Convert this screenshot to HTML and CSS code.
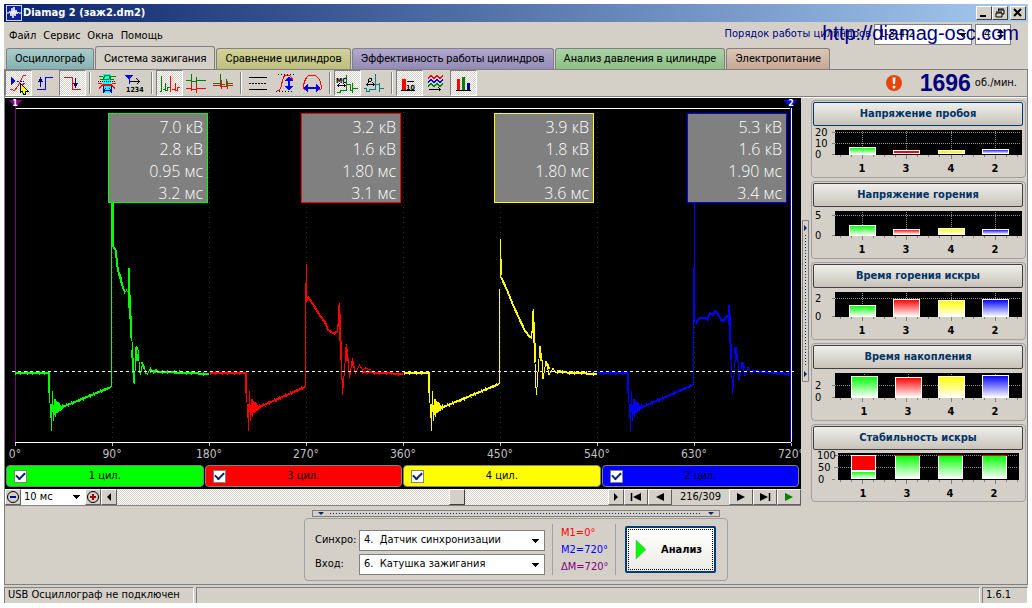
FILE: index.html
```html
<!DOCTYPE html>
<html lang="ru">
<head>
<meta charset="utf-8">
<title>Diamag 2 (заж2.dm2)</title>
<link rel="stylesheet" href="styles.css">
</head>
<body>
<div class="window">
  <header class="titlebar">
    <svg class="app-icon" viewBox="0 0 16 16"><rect width="16" height="16" fill="#d0d8f0"/><rect x="1" y="1" width="14" height="14" fill="#1020a0"/><path d="M1 8h2l1-2 1 5 1-8 1 10 1-11 1 9 1-6 1 4 1-2 1 1h2" fill="none" stroke="#fff"/></svg>
    <h1 class="title">Diamag 2 (заж2.dm2)</h1>
    <div class="winbuttons">
      <button class="winbtn" aria-label="Свернуть"><svg viewBox="0 0 12 10"><path d="M2 8h6" stroke="#000" stroke-width="2"/></svg></button>
      <button class="winbtn" aria-label="Восстановить"><svg viewBox="0 0 12 10"><path d="M4 1h6M4 2h6v4h-2M4.500 1v2M2 4h6M2 5h6v4H2z" fill="none" stroke="#000"/></svg></button>
      <button class="winbtn close" aria-label="Закрыть"><svg viewBox="0 0 12 10"><path d="M2 1l7 7M9 1L2 8" stroke="#000" stroke-width="2"/></svg></button>
    </div>
  </header>

  <div class="menubar">
    <nav class="menu">
      <a href="#file">Файл</a><a href="#service">Сервис</a><a href="#windows">Окна</a><a href="#help">Помощь</a>
    </nav>
    <div class="order">
      <label for="order">Порядок работы цилиндров</label>
      <select id="order" class="box order-select"><option>1-3-4-2</option></select>
      <div class="box spin"><input type="text" value="4" aria-label="Число цилиндров"><svg viewBox="0 0 7 12"><path d="M0 5l3.500-4L7 5zM0 7l3.500 4L7 7z"/></svg></div>
      <a class="site" href="#site">http://diamag-osc.com</a>
    </div>
  </div>

  <nav class="tabs">
    <button class="tab teal">Осциллограф</button>
    <button class="tab active">Система зажигания</button>
    <button class="tab olive">Сравнение цилиндров</button>
    <button class="tab violet">Эффективность работы цилиндров</button>
    <button class="tab green">Анализ давления в цилиндре</button>
    <button class="tab brown">Электропитание</button>
  </nav>

  <main class="page">
    <div class="toolbar">
      <div class="toolgroup">
        <button class="tool on" aria-label="Курсор"><svg viewBox="0 0 27 24"><path d="M5 18l3 1h2l3-4 3-6 2-4 3-1M17 14l3-2" fill="none" stroke="red"/><path d="M12 10h7" stroke="#00f" stroke-dasharray="2 1"/><path d="M6 6v8l5-4z" fill="#00f"/><path d="M15 12v10l2-2 2 4 2-1-1-3h3z" fill="#ff0" stroke="#000"/></svg></button>
        <button class="tool" aria-label="Фронт"><svg viewBox="0 0 27 24"><path d="M5 18.500h8v-12h8" fill="none" stroke="#00f"/><path d="M8.500 16V9" stroke="#000080"/><path d="M6 11l2.500-5L11 11z" fill="#000080"/></svg></button>
        <button class="tool on" aria-label="Спад"><svg viewBox="0 0 27 24"><path d="M5 6.500h8v12h9" fill="none" stroke="red"/><path d="M16.500 7v8" stroke="#000080"/><path d="M14 12l2.500 5L19 12z" fill="#000080"/></svg></button>
      </div>
      <div class="toolgroup">
        <button class="tool" aria-label="Наложение"><svg viewBox="0 0 27 24"><path d="M9 3h8v19H9z" fill="#0ff"/><path d="M4.500 5.500h4l2 3h4l2-3h5M6 8.500h3l2-4h4l2 4h3" fill="none" stroke="green"/><path d="M4 10.500h18" stroke="#000" stroke-dasharray="1 1"/><path d="M4 12.500h3l3 2h6l3-2h3M5 17.500l4-4h8l4 4" fill="none" stroke="red"/><path d="M9.500 15v7M17.500 15v7M9 19.500h8M11.500 17.500l-2 2 2 2M15.500 17.500l2 2-2 2" fill="none" stroke="#0000a0"/></svg></button>
        <button class="tool" aria-label="Нумерация"><svg viewBox="0 0 27 24"><path d="M4 4h8l-4 5z" fill="#00f"/><path d="M8 8v5" stroke="#00f"/><path d="M9 10.500h9M15.500 7.500l3 3-3 3" fill="none" stroke="#000"/><text x="5" y="21" class="tiny">1234</text></svg></button>
      </div>
      <div class="toolgroup">
        <button class="tool on" aria-label="Парад"><svg viewBox="0 0 27 24"><path d="M3.500 20.500h2V4.500v15M6.500 18.500h3v-7v8h2v-3h2" fill="none" stroke="green"/><path d="M13.500 20.500h1V4.500v15M15.500 18.500h4v-7v8h2v-3h2" fill="none" stroke="red"/></svg></button>
        <button class="tool" aria-label="Растр"><svg viewBox="0 0 27 24"><path d="M3 9.500h5M8.500 3v13M9 10.500h4M13.500 6v8M14 9.500h9" fill="none" stroke="green"/><path d="M3 17.500h5M8.500 12v8M9 18.500h4M13.500 14v8M14 17.500h9" fill="none" stroke="red"/></svg></button>
        <button class="tool" aria-label="Совмещение"><svg viewBox="0 0 27 24"><path d="M3 12.500h7M10.500 3v13M11 13.500h4M16.500 8v8M17 12.500h6" fill="none" stroke="green"/><path d="M3 14.500h8M11.500 9v9M12 15.500h4M17.500 10v8M18 14.500h5" fill="none" stroke="red"/></svg></button>
      </div>
      <div class="toolgroup">
        <button class="tool" aria-label="Уровень"><svg viewBox="0 0 27 24"><path d="M4 6.500h18M4 18.500h18" stroke="#000"/><path d="M4 12.500h18" stroke="#000" stroke-dasharray="2 1"/></svg></button>
        <button class="tool" aria-label="Масштаб по вертикали"><svg viewBox="0 0 27 24"><path d="M6 3.500h16M4 20.500h18" stroke="#000" stroke-dasharray="1 2"/><path d="M5 20c7 0 3-15 9-16 5 0 6 3 7 6" fill="none" stroke="red"/><path d="M17 7v10" stroke="#00f" stroke-width="2"/><path d="M13 10l4-5 4 5zM13 15l4 5 4-5z" fill="#00f"/></svg></button>
        <button class="tool" aria-label="Масштаб по горизонтали"><svg viewBox="0 0 27 24"><path d="M7 18H5c-1-7 2-14 8-14s10 7 9 14h-2" fill="none" stroke="red"/><path d="M8 17h10" stroke="#00f" stroke-width="2"/><path d="M9 13l-5 4 5 4zM17 13l5 4-5 4z" fill="#00f"/></svg></button>
      </div>
      <div class="toolgroup">
        <button class="tool on" aria-label="Время в мс"><svg viewBox="0 0 27 24"><path d="M3 21.500h3v-2h6M12.500 4v16M13 13.500h3v6h2M18.500 12v10M19 17.500h5" fill="none" stroke="green"/><text x="2" y="12" class="tiny">МС</text><path d="M3 14.500h8M5.500 12.500l-2 2 2 2M9.500 12.500l2 2-2 2" fill="none" stroke="#000"/></svg></button>
        <button class="tool" aria-label="Угол"><svg viewBox="0 0 27 24"><path d="M3 17.500h2v3h3v-2h6M14.500 3v16M15 13.500h3M18.500 12v9M19 17.500h4" fill="none" stroke="teal"/><circle cx="9" cy="9" r="1.500" fill="none" stroke="#000"/><path d="M5 13.500h9M7.500 11.500l-2 2 2 2M11.500 11.500l2 2-2 2" fill="none" stroke="#000"/></svg></button>
      </div>
      <div class="toolgroup">
        <button class="tool on" aria-label="Среднее"><svg viewBox="0 0 27 24"><path d="M6 8h4v11H6z" fill="red"/><path d="M5 19.500h14M11 10.500h7" stroke="#000"/><text x="10" y="19" class="tiny">10</text></svg></button>
        <button class="tool" aria-label="Тренд"><svg viewBox="0 0 27 24"><path d="M5 7.500l3-3 3 3 3-3 3 3 3-3" fill="none" stroke="red"/><path d="M5 11.500l3-3 3 3 3-3 3 3 3-3" fill="none" stroke="#00f"/><path d="M5 15.500l3-3 3 3 3-3 3 3 3-3" fill="none" stroke="green"/><path d="M6 18.500h12M15.500 16.500l2 2-2 2" fill="none" stroke="#000"/></svg></button>
        <button class="tool on" aria-label="Диаграмма"><svg viewBox="0 0 27 24"><path d="M7 8h3v11H7z" fill="red"/><path d="M12 6h3v13h-3z" fill="green"/><path d="M17 12h3v7h-3z" fill="#000080"/><path d="M6 19.500h15" stroke="#000"/></svg></button>
      </div>
      <div class="rpm">
        <svg class="alert" viewBox="0 0 18 18"><circle cx="9" cy="9" r="8" fill="#e8450c"/><path d="M7.500 3.500h3l-.5 6.500H8z" fill="#fff"/><circle cx="9" cy="13" r="1.500" fill="#fff"/></svg>
        <strong class="rpm-value">1696</strong><span>об./мин.</span>
      </div>
    </div>

    <div class="work">
      <section class="scope">
        <svg class="wave" viewBox="5 98 796 366">
          <defs><path id="ring" d="M48.500 373v20M51.500 404v12M54.500 400v15M55.500 405v12M56.500 402v11M57.500 404v9M58.500 403v9M59.500 405v6M60.500 405v6M62.500 404v5"/></defs>
          <rect x="5" y="98" width="796" height="366" fill="#000"/>
          <path class="vgrid" d="M112.500 112V442M209.500 112V442M306.500 112V442M403.500 112V442M500.500 112V442M597.500 112V442M694.500 112V442"/>
          <path d="M15 108.500h776M15 442.500h776M791.500 108v334" stroke="#fff" fill="none"/>
          <path d="M15.500 443v3M112.500 443v3M209.500 443v3M306.500 443v3M403.500 443v3M500.500 443v3M597.500 443v3M694.500 443v3M791.500 443v3" stroke="#c0c0c0"/>
          <path d="M15.500 106v336" stroke="#800080"/>
          <g stroke="#0f0" fill="none">
            <path class="thick" d="M15 373h34M60 408L111 387M150 371L163 372L209 374"/>
            <path class="rough" d="M15 373h34M56 410L111 387M150 371L209 374"/>
            <use href="#ring"/>
            <path d="M49.500 372v22l1 18v-8l1 27v-13l1-27v12l1 18v-10l1-12 1 12v-12l1 12v-10l1 9v-8l1 6v-6l2 4M111.500 387V203M112.500 203v43l2 3 2 2 1 14 2 9 1 1 2 9 2 9 2-3 2 3 1-25v22l1 9 1 33 1 18 1 32 1 1 1-23 1-14 2 5 1 20 1 4 2-12 2 4 1 6 2 1 3-6 3 5 3-3 3 2 6-1"/>
            <path d="M112.500 203v43" stroke-width="3"/>
            <path class="stair" d="M113 246l3 5 1 14 2 9 3 10 2 7M129 268v40M130 298l1 40M132 350l2 30M136 347l1 14M142 362l2 7"/>
          </g>
          <g stroke="red" fill="none">
            <path class="thick" d="M210 373h36M257 408L305 387M362 372L403 374"/>
            <path class="rough" d="M210 373h36M253 410L305 387M362 372L403 374"/>
            <use href="#ring" x="197"/>
            <path d="M246.500 372v22l1 18v-8l1 27v-13l1-27v12l1 18v-10l1-12 1 12v-12l1 12v-10l1 9v-8l1 6v-6l2 4M305.500 387V283M306.500 264v38l2-5 5 7 7 12 5 6 3 8 6 4 3-3 2-28 1 20 1 40 1 32 2-25 2-26 2 19 1 15 3-20 3 15 4-8 3 5 3-2 5 2"/>
            <path d="M306 283v19" stroke-width="2"/>
            <path class="stair" d="M308 297l5 7 7 12 5 6 3 8 5 3 4-1M339 305v22M340 320l1 40M346 347l1 14M352 361l2 7"/>
          </g>
          <g stroke="#ff0" fill="none">
            <path class="thick" d="M404 373h25M441 408L499 384M557 372L597 374"/>
            <path class="rough" d="M404 373h25M437 410L499 384M557 372L597 374"/>
            <use href="#ring" x="380"/>
            <path d="M429.500 372v22l1 18v-8l1 27v-13l1-27v12l1 18v-10l1-12 1 12v-12l1 12v-10l1 9v-8l1 6v-6l2 4M499.500 384V289M500.500 239v38l2 2 5 11 6 15 6 13 6 13 6 7 2-29 1 36 1 35 1 15 2-30 1.500-19 2 14 1 19 3-18 3 14 4-7 3 5 3-3 4 2"/>
            <path d="M501 259v16" stroke-width="2"/>
            <path class="stair" d="M502 279l5 11 6 15 6 13 6 13 5 6 2-1M533 311v22M534 322l1 40M540 348l1 13M547 363l2 6"/>
          </g>
          <g stroke="#00f" fill="none">
            <path class="thick" d="M598 373h30M640 408L693 385M752 371L790 374"/>
            <path class="rough" d="M598 373h30M636 410L693 385M752 371L790 374"/>
            <use href="#ring" x="579"/>
            <path d="M628.500 372v22l1 18v-8l1 27v-13l1-27v12l1 18v-10l1-12 1 12v-12l1 12v-10l1 9v-8l1 6v-6l2 4M693.500 385V270M694.500 203v119l2 1 4-5h4l3 2 3-7 3 2 2-4 3 3 3 7h3l2-5 2 1 1-12 1 19 1 37 1 33 2-24 1.500-23 2 14 1 19 3-17 3 13 3-9 3 6 4-3 5 2"/>
            <path d="M694 268v52" stroke-width="2"/>
            <path class="stair" d="M696 322l4-4h4l3 1 3-6 3 2 2-4 3 3 3 6h3l3-5M729 305v20M730 325l1 35M735 347l1 13M742 362l2 6"/>
            <path d="M790.500 106v336"/>
          </g>
          <path d="M12 371.500h782" stroke="#fff" stroke-dasharray="3 3"/>
          <path d="M8 100h15l-7.500 7z" fill="#800080"/><path d="M783 100h15l-7.500 7z" fill="#00f"/>
          <g class="marker"><text x="15" y="106">1</text><text x="791" y="106">2</text></g>
          <g fill="#808080">
            <rect x="108.500" y="113.500" width="99" height="89" stroke="#0f0"/>
            <rect x="301.500" y="113.500" width="99" height="89" stroke="red"/>
            <rect x="494.500" y="113.500" width="99" height="89" stroke="#ff0"/>
            <rect x="687.500" y="113.500" width="99" height="89" stroke="#00f"/>
          </g>
          <g class="readout">
            <text x="203" y="133">7.0 кВ</text><text x="203" y="155">2.8 кВ</text><text x="203" y="177">0.95 мс</text><text x="203" y="199">3.2 мс</text>
            <text x="396" y="133">3.2 кВ</text><text x="396" y="155">1.6 кВ</text><text x="396" y="177">1.80 мс</text><text x="396" y="199">3.1 мс</text>
            <text x="589" y="133">3.9 кВ</text><text x="589" y="155">1.8 кВ</text><text x="589" y="177">1.80 мс</text><text x="589" y="199">3.6 мс</text>
            <text x="782" y="133">5.3 кВ</text><text x="782" y="155">1.6 кВ</text><text x="782" y="177">1.90 мс</text><text x="782" y="199">3.4 мс</text>
          </g>
          <g class="axis">
            <text x="15" y="458">0°</text><text x="112" y="458">90°</text><text x="209" y="458">180°</text><text x="306" y="458">270°</text><text x="403" y="458">360°</text><text x="500" y="458">450°</text><text x="597" y="458">540°</text><text x="694" y="458">630°</text><text x="791" y="458">720°</text>
          </g>
        </svg>
        <div class="legend">
          <label class="cyl c1"><input type="checkbox" checked><span>1 цил.</span></label>
          <label class="cyl c3"><input type="checkbox" checked><span>3 цил.</span></label>
          <label class="cyl c4"><input type="checkbox" checked><span>4 цил.</span></label>
          <label class="cyl c2"><input type="checkbox" checked><span>2 цил.</span></label>
        </div>
        <div class="scroller">
          <button class="sbtn" aria-label="Уменьшить"><svg viewBox="0 0 14 14"><circle cx="7" cy="7" r="5.500" fill="none" stroke="#000"/><path d="M4 7h6" stroke="#0000a0" stroke-width="2"/></svg></button>
          <select class="scale" aria-label="Развёртка"><option>10 мс</option></select>
          <button class="sbtn" aria-label="Увеличить"><svg viewBox="0 0 14 14"><circle cx="7" cy="7" r="5.500" fill="none" stroke="#000"/><path d="M4 7h6M7 4v6" stroke="#a00000" stroke-width="2"/></svg></button>
          <button class="sbtn" aria-label="Влево"><svg viewBox="0 0 14 14"><path d="M9 3v8L5 7z"/></svg></button>
          <input class="track" type="range" min="0" max="309" value="216" aria-label="Позиция">
          <button class="sbtn" aria-label="Вправо"><svg viewBox="0 0 14 14"><path d="M5 3v8l4-4z"/></svg></button>
          <button class="sbtn wide" aria-label="В начало"><svg viewBox="0 0 14 14"><path d="M2.500 3v8" stroke="#000" stroke-width="1.500"/><path d="M12 3v8L4 7z"/></svg></button>
          <button class="sbtn wide" aria-label="Назад"><svg viewBox="0 0 14 14"><path d="M11 3v8L3 7z"/></svg></button>
          <output class="frame">216/309</output>
          <button class="sbtn wide" aria-label="Вперёд"><svg viewBox="0 0 14 14"><path d="M3 3v8l8-4z"/></svg></button>
          <button class="sbtn wide" aria-label="В конец"><svg viewBox="0 0 14 14"><path d="M11.500 3v8" stroke="#000" stroke-width="1.500"/><path d="M2 3v8l8-4z"/></svg></button>
          <button class="sbtn wide" aria-label="Пуск"><svg viewBox="0 0 14 14"><path d="M3 3v8l8-4z" fill="green"/></svg></button>
        </div>
      </section>

      <div class="vsplit"><svg viewBox="0 0 7 162"><path d="M.5.500h6v161h-6z" fill="none" stroke="#808080"/><path d="M2 5v6l3-3zM2 151v6l3-3z" fill="#0a246a"/><path d="M3.500 15v131" stroke="#0a246a" stroke-dasharray="1 2"/></svg></div>

      <aside class="side">
        <svg class="defs" aria-hidden="true"><defs>
          <linearGradient id="g1" x2="0" y2="1"><stop stop-color="#0f0"/><stop offset="1" stop-color="#fff"/></linearGradient>
          <linearGradient id="g3" x2="0" y2="1"><stop stop-color="red"/><stop offset="1" stop-color="#fff"/></linearGradient>
          <linearGradient id="g4" x2="0" y2="1"><stop stop-color="#ff0"/><stop offset="1" stop-color="#fff"/></linearGradient>
          <linearGradient id="g2" x2="0" y2="1"><stop stop-color="#00f"/><stop offset="1" stop-color="#fff"/></linearGradient>
          <g id="ticks"><path d="M27.500 29v2M38.500 29v2M60.500 29v2M71.500 29v2M82.500 29v2M104.500 29v2M115.500 29v2M126.500 29v2M149.500 29v2M160.500 29v2M171.500 29v2M193.500 29v2M204.500 29v2M49.500 29v4M93.500 29v4M138.500 29v4M182.500 29v4M19 28.500h3"/></g>
        </defs></svg>
        <section class="card">
          <button class="cardbtn focus">Напряжение пробоя</button>
          <svg class="bars" viewBox="0 0 210 50"><path d="M22 4h187v25H22z"/><path class="grid" d="M22 6.500h185M22 17.500h185M49.500 5v23M93.500 5v23M138.500 5v23M182.500 5v23"/><use href="#ticks" class="ticks"/><path class="ticks" d="M19 6.500h3M19 17.500h3"/>
            <g class="bar"><path fill="url(#g1)" d="M36.500 21.500h26v7h-26z"/><path fill="red" d="M80.500 24.500h26v3h-26z"/><path fill="#ff0" d="M125.500 24.500h26v3h-26z"/><path fill="url(#g2)" d="M169.500 23.500h26v4h-26z"/></g>
            <text x="2" y="10">20</text><text x="2" y="21">10</text><text x="2" y="32">0</text>
            <g class="cat"><text x="49" y="46">1</text><text x="93" y="46">3</text><text x="138" y="46">4</text><text x="182" y="46">2</text></g></svg>
        </section>
        <section class="card">
          <button class="cardbtn">Напряжение горения</button>
          <svg class="bars" viewBox="0 0 210 50"><path d="M22 4h187v25H22z"/><path class="grid" d="M22 8.500h185M49.500 5v23M93.500 5v23M138.500 5v23M182.500 5v23"/><use href="#ticks" class="ticks"/><path class="ticks" d="M19 8.500h3"/>
            <g class="bar"><path fill="url(#g1)" d="M36.500 18.500h26v10h-26z"/><path fill="url(#g3)" d="M80.500 22.500h26v5h-26z"/><path fill="url(#g4)" d="M125.500 21.500h26v6h-26z"/><path fill="url(#g2)" d="M169.500 22.500h26v5h-26z"/></g>
            <text x="2" y="12">5</text><text x="2" y="32">0</text>
            <g class="cat"><text x="49" y="46">1</text><text x="93" y="46">3</text><text x="138" y="46">4</text><text x="182" y="46">2</text></g></svg>
        </section>
        <section class="card">
          <button class="cardbtn">Время горения искры</button>
          <svg class="bars" viewBox="0 0 210 50"><path d="M22 4h187v25H22z"/><path class="grid" d="M22 10.500h185M49.500 5v23M93.500 5v23M138.500 5v23M182.500 5v23"/><use href="#ticks" class="ticks"/><path class="ticks" d="M19 10.500h3"/>
            <g class="bar"><path fill="url(#g1)" d="M36.500 17.500h26v11h-26z"/><path fill="url(#g3)" d="M80.500 11.500h26v17h-26z"/><path fill="url(#g4)" d="M125.500 12.500h26v16h-26z"/><path fill="url(#g2)" d="M169.500 11.500h26v17h-26z"/></g>
            <text x="2" y="14">2</text><text x="2" y="32">0</text>
            <g class="cat"><text x="49" y="46">1</text><text x="93" y="46">3</text><text x="138" y="46">4</text><text x="182" y="46">2</text></g></svg>
        </section>
        <section class="card">
          <button class="cardbtn">Время накопления</button>
          <svg class="bars" viewBox="0 0 210 50"><path d="M22 4h187v25H22z"/><path class="grid" d="M22 16.500h185M51.500 5v23M95.500 5v23M138.500 5v23M182.500 5v23"/><use href="#ticks" class="ticks"/><path class="ticks" d="M19 16.500h3"/>
            <g class="bar"><path fill="url(#g1)" d="M38.500 7.500h26v21h-26z"/><path fill="url(#g3)" d="M82.500 8.500h26v20h-26z"/><path fill="url(#g4)" d="M125.500 7.500h26v21h-26z"/><path fill="url(#g2)" d="M169.500 6.500h26v22h-26z"/></g>
            <text x="2" y="20">2</text><text x="2" y="32">0</text>
            <g class="cat"><text x="51" y="46">1</text><text x="95" y="46">3</text><text x="138" y="46">4</text><text x="182" y="46">2</text></g></svg>
        </section>
        <section class="card">
          <button class="cardbtn">Стабильность искры</button>
          <svg class="bars" viewBox="0 0 210 50"><path d="M25 3h181v27H25z"/><path class="grid" d="M25 5.500h179M25 17.500h179"/><use href="#ticks" class="ticks" y="1"/><path class="ticks" d="M21 5.500h4M21 17.500h4"/>
            <g class="bar"><path fill="red" d="M38.500 5.500h24v15h-24z"/><path fill="url(#g1)" d="M38.500 21.500h24v7h-24z"/><path fill="url(#g1)" d="M82.500 5.500h24v23h-24z"/><path fill="url(#g1)" d="M125.500 5.500h24v23h-24z"/><path fill="url(#g1)" d="M169.500 5.500h24v23h-24z"/></g>
            <path d="M82 5.500h25M125 5.500h25M169 5.500h25" stroke="red"/>
            <text x="4" y="9">100</text><text x="5" y="21">50</text><text x="5" y="33">0</text>
            <g class="cat"><text x="50" y="47">1</text><text x="94" y="47">3</text><text x="137" y="47">4</text><text x="181" y="47">2</text></g></svg>
        </section>
      </aside>
    </div>

    <div class="bottom">
      <div class="hsplit"><i class="down"></i><i class="dots"></i><i class="down"></i></div>
      <section class="controls">
        <div class="form">
          <label for="sync">Синхро:</label><select id="sync" class="box"><option>4.&nbsp; Датчик синхронизации</option></select>
          <label for="input">Вход:</label><select id="input" class="box"><option>6.&nbsp; Катушка зажигания</option></select>
        </div>
        <div class="marks"><span class="m1">М1=0°</span><span class="m2">М2=720°</span><span class="dm">ΔМ=720°</span></div>
        <button class="analyze"><svg viewBox="0 0 12 20"><path d="M1 0v19l10-9.500z" fill="#0f0" stroke="#808080" stroke-width=".5"/></svg><span>Анализ</span></button>
      </section>
    </div>
  </main>

  <footer class="status"><span>USB Осциллограф не подключен</span><span></span><span>1.6.1</span></footer>
</div>
</body>
</html>
```
FILE: styles.css
```css
* { box-sizing: border-box; }
body { margin: 0; padding: 4px; background: #fff; color: #000; font: 11px/14px "DejaVu Sans Condensed", "DejaVu Sans", sans-serif; }
button, select, input { font: inherit; color: inherit; margin: 0; padding: 0; border: 0; border-radius: 0; background: none; }
a { color: inherit; text-decoration: none; }
svg { display: block; }
.window { background: #d4d0c8; display: flex; flex-direction: column; }

.titlebar { height: 18px; display: flex; align-items: center; gap: 1px; padding: 0 2px; background: linear-gradient(90deg, #0a246a, #a6caf0); }
.app-icon { width: 16px; height: 16px; }
.title { margin: 0; flex: 1; color: #fff; font: bold 11px/16px "DejaVu Sans Condensed", sans-serif; }
.winbuttons { display: flex; }
.winbtn { width: 16px; height: 14px; padding: 1px; background: #d4d0c8; border: 1px solid; border-color: #fff #404040 #404040 #fff; }
.winbtn svg { width: 12px; height: 10px; }
.close { margin-left: 2px; }

.menubar { height: 24px; display: flex; justify-content: space-between; align-items: center; padding: 0 17px 0 5px; }
.menu { display: flex; gap: 7px; padding-top: 3px; }
.order { position: relative; display: flex; align-items: center; gap: 3px; color: #000080; }
.box { background: #fff; border: 1px solid #808080; color: #000; }
.box, .scale { appearance: none; background-image: linear-gradient(#000, #000), linear-gradient(#000, #000), linear-gradient(#000, #000), linear-gradient(#000, #000); background-repeat: no-repeat; background-size: 7px 1px, 5px 1px, 3px 1px, 1px 1px; background-position: right 5px top 8px, right 6px top 9px, right 7px top 10px, right 8px top 11px; }
.order-select { width: 98px; height: 21px; padding-left: 4px; }
.spin { width: 36px; height: 21px; display: flex; align-items: center; justify-content: space-between; padding: 0 6px 0 8px; background-image: none; }
.spin input { width: 10px; }
.spin svg { width: 7px; height: 12px; }
.site { position: absolute; right: -8px; top: -1px; font: 20px/20px "Liberation Sans", Arial, sans-serif; color: #000080; }

.tabs { display: flex; gap: 1px; align-items: flex-end; padding-left: 2px; height: 23px; }
.tab { height: 21px; padding: 0 8px; border: 1px solid #808080; border-bottom: 0; border-radius: 3px 3px 0 0; font: 11px/18px Roboto, sans-serif; white-space: nowrap; }
.teal { background: linear-gradient(#a8cccc, #88b2b2); }
.olive { background: linear-gradient(#d2d29a, #bfbf7c); }
.violet { background: linear-gradient(#b2aad0, #948ab6); }
.green { background: linear-gradient(#aad2a6, #8cc084); }
.brown { background: linear-gradient(#dcc6b8, #c6a894); }
.active { height: 24px; margin-bottom: -1px; background: #d4d0c8; }

.page { border: 1px solid #808080; display: flex; flex-direction: column; }
.toolbar { height: 27px; display: flex; gap: 8px; border-bottom: 1px solid #808080; }
.toolgroup { display: flex; position: relative; }
.toolgroup + .toolgroup::before { content: ""; position: absolute; left: -5px; top: 2px; bottom: 2px; border-left: 1px solid #808080; border-right: 1px solid #fff; }
.tool { width: 27px; height: 26px; border: 1px solid transparent; display: flex; }
.tool svg { width: 27px; height: 24px; margin-left: -1px; flex: none; shape-rendering: crispEdges; }
.on { border-color: #808080 #fff #fff #808080; background: repeating-conic-gradient(#fff 0 25%, #d4d0c8 0 50%) 0 0 / 2px 2px; }
.tiny { font: bold 7px "DejaVu Sans Condensed", sans-serif; }
.rpm { margin-left: auto; display: flex; align-items: center; padding-right: 10px; gap: 4px; }
.alert { width: 18px; height: 18px; margin-right: 13px; }
.rpm-value { font: bold 23px/24px "Liberation Sans", Arial, sans-serif; color: #000080; }

.work { display: grid; grid-template-columns: minmax(0, 1fr) 7px 217px; column-gap: 1px; border-top: 1px solid #fff; }
.scope { min-width: 0; }
.wave { width: 100%; shape-rendering: crispEdges; }
.vgrid { stroke: #303010; stroke-dasharray: 1 4; }
.thick { stroke-width: 2; }
.rough { stroke-width: 4; stroke-dasharray: 1 4 1 6; }
.stair { stroke-width: 2; }
.marker { font: bold 8px "DejaVu Sans", sans-serif; fill: #fff; text-anchor: middle; }
.readout { font: 300 16px "Open Sans", sans-serif; fill: #fff; text-anchor: end; }
.axis { font: 12px "DejaVu Sans Condensed", sans-serif; fill: #c0c0c0; text-anchor: middle; }

.legend { display: grid; grid-template-columns: repeat(4, 1fr); gap: 1px; padding: 1px 2px 2px 1px; background: #000; }
.cyl { height: 22px; display: flex; align-items: center; border: 1px solid #808080; border-radius: 4px; padding-left: 7px; }
.cyl span { flex: 1; text-align: center; padding-right: 20px; }
.cyl input { appearance: none; width: 13px; height: 13px; background: #fff; border: 1px solid #808080; display: grid; place-items: center; }
.cyl input:checked::before { content: ""; width: 7px; height: 4px; border-left: 2px solid #0a246a; border-bottom: 2px solid #0a246a; transform: rotate(-45deg); margin-bottom: 3px; }
.c1 { background: #0f0; }
.c3 { background: red; }
.c4 { background: #ff0; }
.c2 { background: #00f; }

.scroller { height: 17px; display: flex; border-bottom: 1px solid #808080; }
.sbtn { width: 16px; flex: none; display: grid; place-items: center; background: #d4d0c8; border: 1px solid; border-color: #fff #606060 #606060 #fff; }
.sbtn svg { width: 14px; height: 14px; }
.wide { width: 24px; }
.scale { width: 64px; padding-left: 3px; background-color: #fff; background-position: right 5px top 6px, right 6px top 7px, right 7px top 8px, right 8px top 9px; }
.track { appearance: none; flex: 1; min-width: 0; background: repeating-conic-gradient(#fff 0 25%, #d4d0c8 0 50%) 0 0 / 2px 2px; }
.track::-webkit-slider-thumb { appearance: none; width: 16px; height: 16px; background: #d4d0c8; border: 1px solid; border-color: #fff #404040 #404040 #fff; }
.frame { width: 57px; text-align: center; line-height: 16px; }
.vsplit { padding-top: 122px; }
.vsplit svg { width: 7px; }

.side { display: flex; flex-direction: column; gap: 3px; padding: 2px 1px 0 1px; }
.defs { position: absolute; width: 0; height: 0; }
.card { border: 1px solid #a0a0a0; border-radius: 4px; padding: 1px 2px 0 1px; height: 78px; }
.cardbtn { display: block; width: 100%; height: 24px; border: 1px solid #404040; border-radius: 2px; background: linear-gradient(#f0eeea, #c8c4ba); color: #003366; font-weight: bold; }
.focus { border-color: #003c74; }
.bars { width: 100%; shape-rendering: crispEdges; }
.bars text { font-size: 11px; }
.bars .cat { font-weight: bold; text-anchor: middle; }
.grid { stroke: #909090; stroke-dasharray: 1 1; }
.ticks { stroke: #808080; fill: none; }
.bar { stroke: #fff; }

.bottom { display: flex; flex-direction: column; align-items: center; padding: 4px 0 3px; }
.hsplit { width: 408px; height: 7px; border: 1px solid #808080; display: flex; align-items: center; gap: 6px; padding: 0 5px; }
.down { border: 3px solid transparent; border-top-color: #0a246a; border-bottom: 0; }
.dots { flex: 1; height: 1px; background: repeating-linear-gradient(90deg, #0a246a 0 1px, transparent 1px 3px); }
.controls { margin-top: 1px; height: 63px; border: 1px solid #a0a0a0; border-radius: 4px; display: flex; align-items: center; padding: 0 11px 0 10px; }
.form { display: grid; grid-template-columns: 44px 186px; row-gap: 3px; align-items: center; padding-top: 5px; }
.form .box { height: 21px; padding-left: 4px; }
.marks { height: 51px; width: 64px; margin: 0 9px 0 7px; padding: 2px 0 0 8px; display: flex; flex-direction: column; gap: 3px; border-left: 1px solid #a0a0a0; border-right: 1px solid #a0a0a0; }
.m1 { color: red; }
.m2 { color: #00f; }
.dm { color: purple; }
.analyze { width: 91px; height: 47px; display: flex; align-items: center; gap: 14px; padding-left: 8px; border: 2px solid #003c74; border-radius: 2px; background: linear-gradient(#fff, #ecebe4); outline: 1px dotted #000; outline-offset: -4px; font-weight: bold; }
.analyze svg { width: 12px; height: 20px; }

.status { display: grid; grid-template-columns: 190px 1fr 46px; column-gap: 2px; margin-top: 2px; height: 16px; }
.status span { border-top: 1px solid #808080; border-left: 1px solid #808080; border-right: 1px solid #fff; padding-left: 3px; line-height: 14px; }
```
